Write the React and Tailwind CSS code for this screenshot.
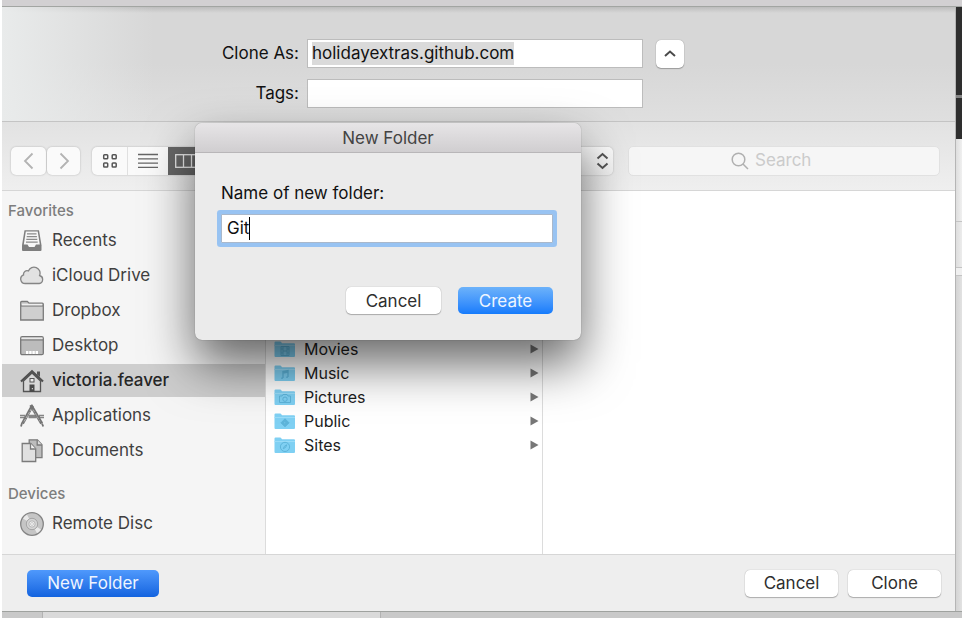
import React from "react";

const RecentsIcon = () => (
  <svg width="24" height="24" viewBox="0 0 24 24" fill="none">
    <path d="M4.500 1.200h14.500l2.500 15v4.800a1 1 0 0 1-1 1h-17.500a1 1 0 0 1-1-1v-4.800z" fill="#7e7e7e" />
    <path d="M5.800 2.600h11.900l2.100 13h-3.800l-1.500 2.400h-5.500l-1.500-2.400H3.800z" fill="#f6f6f6" />
    <path d="M7 4.800h9.500M6.700 7.600h10.200M6.300 10.400h11M6 13.200h11.700" stroke="#8a8a8a" strokeWidth="1.300" />
  </svg>
);
const CloudIcon = () => (
  <svg width="24" height="24" viewBox="0 0 24 24">
    <path d="M5.200 19.500a4.500 4.500 0 0 1-1.600-8.700 3.500 3.500 0 0 1 4.800-3.900 5.900 5.900 0 0 1 11.200 4.600 4.100 4.100 0 0 1-.4 8z" fill="#e2e2e2" stroke="#858585" strokeWidth="1.300" />
  </svg>
);
const FolderIcon = () => (
  <svg width="24" height="24" viewBox="0 0 24 24">
    <path d="M.7 21V3.500a1 1 0 0 1 1-1h5.600l1.800 1.700h13.200a1 1 0 0 1 1 1V21z" fill="#cfcfcf" stroke="#7c7c7c" strokeWidth="1.300" />
    <path d="M1 7h22" stroke="#7c7c7c" strokeWidth="1.200" />
    <path d="M2 5.600h20" stroke="#eee" strokeWidth="1.400" />
  </svg>
);
const DesktopIcon = () => (
  <svg width="24" height="24" viewBox="0 0 24 24">
    <rect x=".7" y="2.700" width="22.600" height="18" rx="1.500" fill="#bcbcbc" stroke="#777" strokeWidth="1.300" />
    <path d="M1.500 4.300h21" stroke="#e8e8e8" strokeWidth="1.500" />
    <path d="M1 6h22" stroke="#777" />
    <path d="M6 18.500h12" stroke="#fff" strokeWidth="3" strokeDasharray="2.400 .8" />
  </svg>
);
const HomeIcon = () => (
  <svg width="24" height="24" viewBox="0 0 24 24">
    <path d="M3.500 12 12 4l8.500 8v10.500h-17z" fill="#d8d8d8" stroke="#555" strokeWidth="1.300" />
    <path d="M17 2.500h3V8l-3-2.500z" fill="#555" />
    <path d="m1 12.500 11-10.300 11 10.300" fill="none" stroke="#505050" strokeWidth="2.200" />
    <rect x="10" y="9.500" width="4" height="3.500" fill="#eee" stroke="#555" />
    <path d="M9.500 15.500h5V23h-5z" fill="#4a4a4a" />
    <path d="M11.800 19h1.200v1.200h-1.200z" fill="#ccc" />
  </svg>
);
const AppsIcon = () => (
  <svg width="24" height="24" viewBox="0 0 24 24" fill="none" stroke="#747474">
    <path d="M0 12.500h5M8.500 12.500h8M19 12.500h5" stroke="#858585" strokeWidth="3.600" />
    <path d="M0 12.500h4.500M20 12.500h4" stroke="#d0d0d0" strokeWidth=".9" />
    <path d="M12.500 1.500 2.500 19.500" strokeWidth="3" />
    <path d="m11.500 4.500-8 14" stroke="#c4c4c4" strokeWidth=".8" strokeDasharray="3 1" />
    <path d="M10.800 1 21.700 19.500" strokeWidth="3.200" />
    <path d="m13 5.500 7 12" stroke="#b4b4b4" strokeWidth=".8" strokeDasharray="3 1" />
    <path d="m2 19-1 3.500M22 19.500l1.200 3" strokeWidth="1.800" />
  </svg>
);
const DocsIcon = () => (
  <svg width="24" height="24" viewBox="0 0 24 24" stroke="#7b7b7b" strokeWidth="1.300">
    <path d="M9.200.8h8.200l4.600 5v12.800H9.200z" fill="#bdbdbd" />
    <path d="M17.200.8V6H22" fill="#ddd" />
    <path d="M2.200 4.500h8.500l5 5.200V22.500H2.200z" fill="#e0e0e0" />
    <path d="M10.500 4.500V10h5.200" fill="#f2f2f2" />
  </svg>
);
const DiscIcon = () => (
  <svg width="24" height="24" viewBox="0 0 24 24">
    <circle cx="12" cy="12" r="11.300" fill="#c5c5c5" stroke="#858585" strokeWidth="1.300" />
    <path d="M12 12 3 6.500A10.500 10.500 0 0 1 7 2.800zM12 12l9 5.500a10.500 10.500 0 0 1-4 3.700z" fill="#e9e9e9" />
    <circle cx="12" cy="12" r="5.700" fill="#d5d5d5" stroke="#a5a5a5" />
    <circle cx="12" cy="12" r="3.200" fill="#ededed" stroke="#b5b5b5" />
    <circle cx="12" cy="12" r="1.400" fill="#fff" stroke="#aaa" strokeWidth=".6" />
  </svg>
);

const favorites = [
  { name: "Recents", Icon: RecentsIcon },
  { name: "iCloud Drive", Icon: CloudIcon },
  { name: "Dropbox", Icon: FolderIcon },
  { name: "Desktop", Icon: DesktopIcon },
  { name: "victoria.feaver", Icon: HomeIcon, active: true },
  { name: "Applications", Icon: AppsIcon },
  { name: "Documents", Icon: DocsIcon },
];
const devices = [{ name: "Remote Disc", Icon: DiscIcon }];

const folders = [
  { name: "Movies", glyph: <path d="M7 6.500h8v9H7zM9 6.500v9M13 6.500v9M9 11h4M7 9h2M7 13h2M13 9h2M13 13h2" /> },
  { name: "Music", glyph: <path d="M9 14V7.500l5-1V13M9 9l5-1M7.300 14.300h1.500M12.300 13.300h1.500" strokeWidth="1.400" /> },
  { name: "Pictures", glyph: <path d="M5.500 8H8l1-1.500h4L14 8h2.500v6.500h-11zM11 9a2.200 2.200 0 1 0 0 4.400A2.200 2.200 0 0 0 11 9z" /> },
  { name: "Public", glyph: <path d="m11 6.800 4 4-4 4-4-4zM10 9.300v3l2.300-1.500z" fill="#5db4da" /> },
  { name: "Sites", glyph: <path d="M11 6.300a4.600 4.600 0 1 0 0 9.200 4.600 4.600 0 0 0 0-9.200zM9.300 12.700l1-2.300 2.500-1.600-1.200 2.600z" /> },
];

function SidebarGroup({ title, items }) {
  return (
    <section>
      <h2 className="mb-[3px] pl-[6px] text-[15px] leading-5 font-medium text-[#7d7d7d]">{title}</h2>
      <ul className="flex flex-col gap-[2px]">
        {items.map(({ name, Icon, active }) => (
          <li key={name}>
            <button
              type="button"
              className={
                active
                  ? "flex h-[33px] w-full items-center gap-2 bg-[#cecece] pl-[18px] text-left text-[17px] font-medium text-[#262626]"
                  : "flex h-[33px] w-full items-center gap-2 pl-[18px] text-left text-[17px] text-[#3f3f3f]"
              }
            >
              <Icon />
              {name}
            </button>
          </li>
        ))}
      </ul>
    </section>
  );
}

const whiteButton =
  "h-[27px] rounded-[5px] bg-white text-[17px] leading-5 text-[#2e2e2e] shadow-[0_0_1px_rgba(0,0,0,0.35),0_1px_1px_rgba(0,0,0,0.25)]";

function Toolbar() {
  return (
    <div className="flex h-[69px] items-center border-b border-[#d6d6d6] bg-linear-to-b from-[#e2e2e2] to-[#efefef] pt-[10px] pr-[15px] pl-[9px]">
      <div className="flex gap-px">
        <button type="button" aria-label="Back" className="flex h-7 w-[35px] items-center justify-center rounded-[5px] bg-[#fafafa] shadow-[0_0_2px_rgba(0,0,0,0.25)]">
          <svg width="12" height="18" viewBox="0 0 12 18" fill="none" stroke="#b3b3b3" strokeWidth="1.800"><path d="M9.500 1.500 2 9l7.500 7.500" /></svg>
        </button>
        <button type="button" aria-label="Forward" className="flex h-7 w-[33px] items-center justify-center rounded-[5px] bg-[#fafafa] shadow-[0_0_2px_rgba(0,0,0,0.25)]">
          <svg width="12" height="18" viewBox="0 0 12 18" fill="none" stroke="#b3b3b3" strokeWidth="1.800"><path d="M2.500 1.500 10 9l-7.500 7.500" /></svg>
        </button>
      </div>
      <div className="ml-3 flex overflow-hidden rounded-[5px] bg-[#fafafa] shadow-[0_0_2px_rgba(0,0,0,0.25)]">
        <button type="button" aria-label="Icon view" className="flex h-7 w-9 items-center justify-center border-r border-[#e0e0e0]">
          <svg width="16" height="16" viewBox="0 0 16 16" fill="none" stroke="#555" strokeWidth="1.500">
            <rect x="1.700" y="1.700" width="4" height="4" rx=".8" /><rect x="10.200" y="1.700" width="4" height="4" rx=".8" />
            <rect x="1.700" y="10" width="4" height="4" rx=".8" /><rect x="10.200" y="10" width="4" height="4" rx=".8" />
          </svg>
        </button>
        <button type="button" aria-label="List view" className="flex h-7 w-10 items-center justify-center">
          <svg width="20" height="16" viewBox="0 0 20 16" stroke="#666" strokeWidth="1.300"><path d="M0 1.500h20M0 5.800h20M0 10.100h20M0 14.400h20" /></svg>
        </button>
        <button type="button" aria-label="Column view" aria-pressed="true" className="flex h-7 w-10 items-center justify-start bg-[#666] pl-[7px]">
          <svg width="26" height="14" viewBox="0 0 26 14" fill="none" stroke="#e8e8e8" strokeWidth="1.300"><rect x=".7" y=".7" width="24" height="12.600" /><path d="M8.500 1v12M16.500 1v12" /></svg>
        </button>
      </div>
      <div className="ml-[140px] flex h-7 flex-1 items-center justify-end rounded-[5px] bg-linear-to-b from-[#fbfbfb] to-[#f3f3f3] pr-1 shadow-[0_0_2px_rgba(0,0,0,0.25)]">
        <select aria-label="Location" className="h-7 min-w-0 flex-1 appearance-none bg-transparent" />
        <svg width="13" height="18" viewBox="0 0 13 18" fill="none" stroke="#555" strokeWidth="2"><path d="m1.500 6.500 5-4.500 5 4.500M1.500 11.500l5 4.500 5-4.500" /></svg>
      </div>
      <label className="ml-[15px] flex h-[30px] w-[312px] items-center justify-center gap-[6px] rounded-[5px] border border-[#e1e1e1] bg-[#f6f6f6]">
        <svg width="18" height="18" viewBox="0 0 18 18" fill="none" stroke="#b0b0b0" strokeWidth="1.500"><circle cx="7.500" cy="7.500" r="6.300" /><path d="m12 12 5 5" /></svg>
        <input type="text" aria-label="Search" placeholder="Search" className="w-[82px] bg-transparent text-[17px] outline-none placeholder:text-[#cbcbcb]" />
      </label>
    </div>
  );
}

function NewFolderDialog() {
  return (
    <div role="dialog" aria-labelledby="new-folder-title" className="absolute top-[123px] left-[195px] w-[386px] overflow-hidden rounded-[7px] bg-[#ebebeb] shadow-[0_0_1px_rgba(0,0,0,0.5),0_24px_50px_rgba(0,0,0,0.6)]">
      <h1 id="new-folder-title" className="border-b border-[#b8b6b8] bg-linear-to-b from-[#e7e5e7] to-[#d0ced0] pt-[5px] pb-1 text-center text-[17px] leading-5 text-[#434343]">
        New Folder
      </h1>
      <form className="pt-7 pr-7 pb-[26px] pl-[26px]">
        <label htmlFor="folder-name" className="block text-[17px] leading-6 text-[#111]">Name of new folder:</label>
        <div className="mt-[9px] flex h-[29px] items-center rounded-[1px] border border-[#a9b8cb] bg-white pl-[5px] ring-4 ring-[#98c3f2]">
          <input id="folder-name" defaultValue="Git" className="field-sizing-content bg-transparent text-[17px] text-[#111] outline-none" />
          <span className="h-[23px] w-px bg-black" />
        </div>
        <div className="mt-[44px] flex justify-end gap-[17px]">
          <button type="button" className={whiteButton + " w-[95px]"}>Cancel</button>
          <button type="submit" className="h-[27px] w-[95px] rounded-[5px] bg-linear-to-b from-[#6cb2fa] to-[#147bfc] text-[17px] leading-5 text-[#edf5ff]">Create</button>
        </div>
      </form>
    </div>
  );
}

export default function App() {
  return (
    <div className="relative flex min-h-screen flex-col bg-white pl-[2px] [font-family:Inter,Roboto,'Liberation_Sans',sans-serif]">
      <div className="h-[7px] border-b border-[#a2a5a2] bg-[#d2d0d2]" />
      <div className="flex flex-1">
        <main className="flex min-w-0 flex-1 flex-col">
          <div className="border-b border-[#c4c4c4] bg-[linear-gradient(to_right,#e9ebeb,#e9ebeb00_16%),linear-gradient(#bdbdbd,#d7d7d7_6px,#d7d7d7_50%,#dfdfdf)] pt-8 pb-[13px] pl-[200px]">
            <div className="flex items-center gap-[13px]">
              <div className="flex items-center gap-2">
                <label htmlFor="clone-as" className="w-[97px] text-right text-[17px] text-[#111]">Clone As:</label>
                <div className="flex h-[29px] w-[336px] items-center border border-[#bcbcbc] bg-white pl-1">
                  <input id="clone-as" defaultValue="holidayextras.github.com" className="field-sizing-content bg-[#dadada] text-[17px] leading-[23px] text-[#111] outline-none" />
                </div>
              </div>
              <button type="button" aria-label="Collapse" className="flex size-7 items-center justify-center rounded-[5px] bg-white shadow-[0_0_1px_rgba(0,0,0,0.4),0_1px_1px_rgba(0,0,0,0.25)]">
                <svg width="12" height="7" viewBox="0 0 12 7" fill="none" stroke="#4a4a4a" strokeWidth="2"><path d="m1 6 5-4.500L11 6" /></svg>
              </button>
            </div>
            <div className="mt-[11px] flex items-center gap-2">
              <label htmlFor="tags" className="w-[97px] text-right text-[17px] text-[#111]">Tags:</label>
              <input id="tags" className="h-[29px] w-[336px] border border-[#bcbcbc] bg-white px-1 text-[17px]" />
            </div>
          </div>
          <Toolbar />
          <div className="flex flex-1">
            <nav className="flex w-[264px] flex-col gap-[17px] border-r border-[#dcdcdc] bg-[#f5f5f5] pt-[10px] pb-[14px]">
              <SidebarGroup title="Favorites" items={favorites} />
              <SidebarGroup title="Devices" items={devices} />
            </nav>
            <ul className="w-[277px] border-r border-[#dcdcdc] bg-white pt-[146px]">
              {folders.map(({ name, glyph }) => (
                <li key={name} className="flex h-6 items-center gap-2 pr-[3px] pl-2 text-[16px] text-[#1d1d1d]">
                  <svg width="22" height="18" viewBox="0 0 22 18">
                    <path d="M.5 16V2.500a1 1 0 0 1 1-1h5l1.700 1.700H20a1 1 0 0 1 1 1V16a1 1 0 0 1-1 1H1.500a1 1 0 0 1-1-1z" fill="#7fd0f3" />
                    <path d="M.5 5.500h20.500" stroke="#9adcf8" />
                    <g fill="none" stroke="#5db4da">{glyph}</g>
                  </svg>
                  <span className="flex-1">{name}</span>
                  <svg width="9" height="10" viewBox="0 0 9 10"><path d="M.5.5v9l8-4.500z" fill="#777" /></svg>
                </li>
              ))}
            </ul>
            <div className="flex-1 bg-white" />
          </div>
          <footer className="flex h-[57px] items-center border-t border-[#d6d6d6] bg-[#eee] pr-[14px] pl-[25px]">
            <button type="button" className="h-[27px] w-[132px] rounded-[5px] bg-linear-to-b from-[#4f99fc] to-[#1263df] text-[17px] leading-5 text-[#eff5ff]">New Folder</button>
            <div className="ml-auto flex gap-[10px]">
              <button type="button" className={whiteButton + " w-[93px]"}>Cancel</button>
              <button type="button" className={whiteButton + " w-[93px]"}>Clone</button>
            </div>
          </footer>
        </main>
        <div className="flex w-[7px] flex-col border-l border-[#b5b5b5] bg-linear-to-r from-[#d4d4d4] to-[#e2e2e2]">
          <div className="h-[88px] bg-[#2e2e2e]" />
          <div className="h-[3px] bg-[#858585]" />
          <div className="h-[41px] bg-[#2e2e2e]" />
          <div className="h-[83px] border-b border-[#c4c4c4] bg-linear-to-r from-[#dedede] to-[#f0f0f0]" />
          <div className="h-[46px] border-b border-[#c4c4c4] bg-linear-to-r from-[#dedede] to-[#ececec]" />
          <div className="h-[8px] border-b border-[#c4c4c4] bg-[#f0f0f0]" />
        </div>
      </div>
      <div className="flex h-[7px] border-t border-[#9fa29f] bg-[#c9c9c9]">
        <div className="w-10" />
        <div className="w-[339px] border-x border-[#b2b2b2] bg-[#dadada]" />
      </div>
      <NewFolderDialog />
    </div>
  );
}
